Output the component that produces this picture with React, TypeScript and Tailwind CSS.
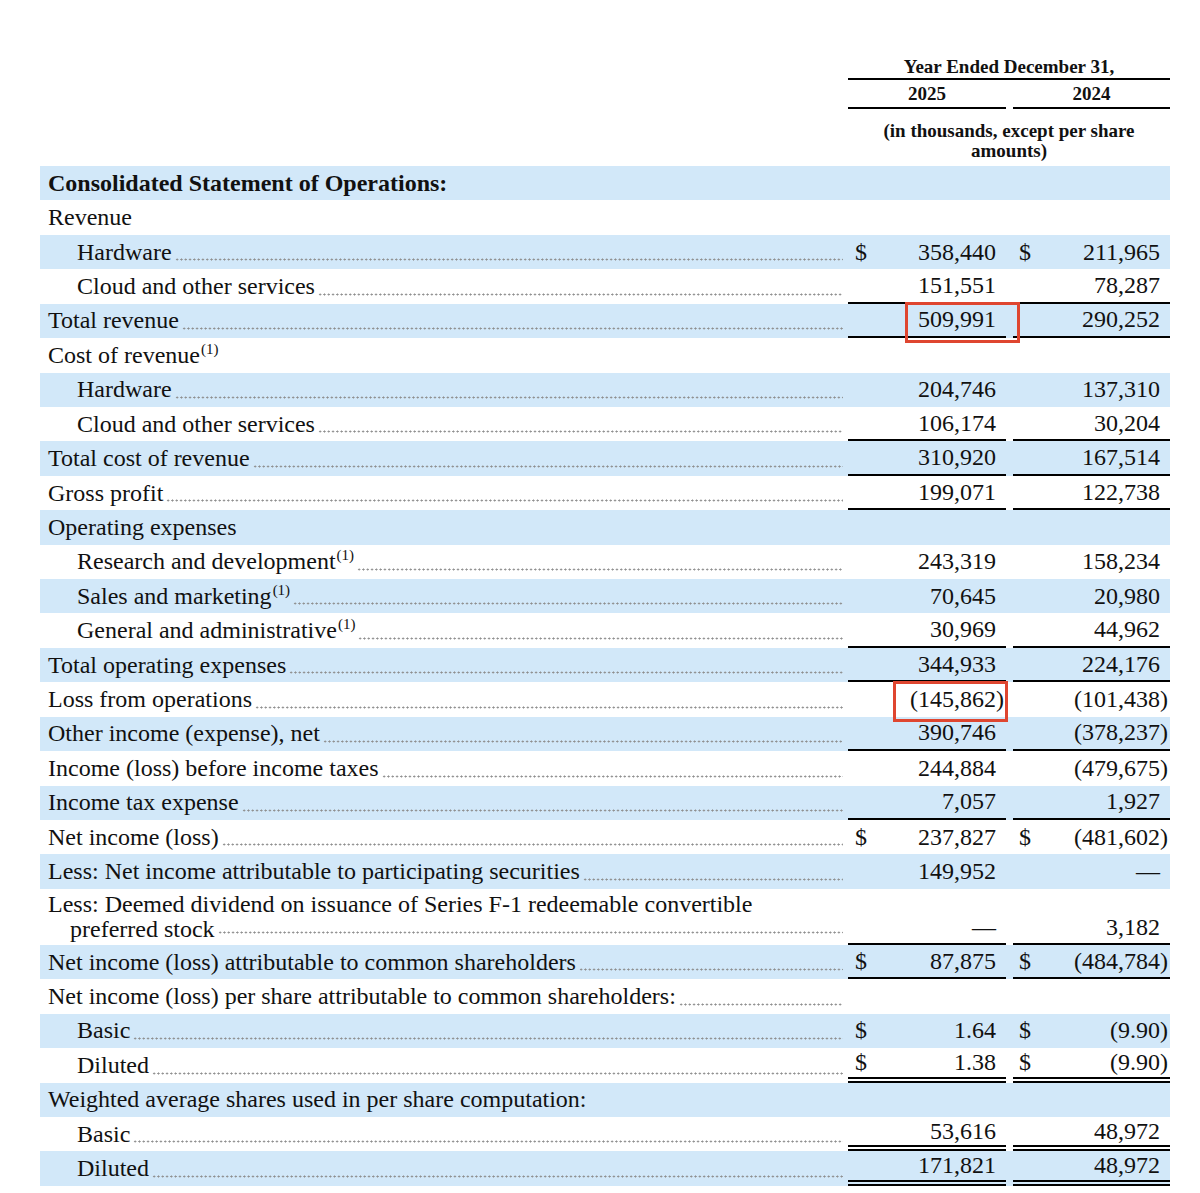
import React from "react";

type Line = "single" | "double";

type Row = {
    label: string;
    cont?: string; // second line of a wrapped label
    sup?: boolean;
    indent?: boolean;
    bold?: boolean;
    dots?: boolean;
    dollar?: boolean;
    a?: string;
    b?: string;
    line?: Line;
    mark?: "total" | "loss";
};

const rows: Array<Row> = [
    { label: "Consolidated Statement of Operations:", bold: true, dots: false },
    { label: "Revenue", dots: false },
    { label: "Hardware", indent: true, dollar: true, a: "358,440", b: "211,965" },
    { label: "Cloud and other services", indent: true, a: "151,551", b: "78,287", line: "single" },
    { label: "Total revenue", a: "509,991", b: "290,252", line: "single", mark: "total" },
    { label: "Cost of revenue", sup: true, dots: false },
    { label: "Hardware", indent: true, a: "204,746", b: "137,310" },
    { label: "Cloud and other services", indent: true, a: "106,174", b: "30,204", line: "single" },
    { label: "Total cost of revenue", a: "310,920", b: "167,514", line: "single" },
    { label: "Gross profit", a: "199,071", b: "122,738", line: "single" },
    { label: "Operating expenses", dots: false },
    { label: "Research and development", sup: true, indent: true, a: "243,319", b: "158,234" },
    { label: "Sales and marketing", sup: true, indent: true, a: "70,645", b: "20,980" },
    { label: "General and administrative", sup: true, indent: true, a: "30,969", b: "44,962", line: "single" },
    { label: "Total operating expenses", a: "344,933", b: "224,176", line: "single" },
    { label: "Loss from operations", a: "(145,862)", b: "(101,438)", mark: "loss" },
    { label: "Other income (expense), net", a: "390,746", b: "(378,237)", line: "single" },
    { label: "Income (loss) before income taxes", a: "244,884", b: "(479,675)" },
    { label: "Income tax expense", a: "7,057", b: "1,927", line: "single" },
    { label: "Net income (loss)", dollar: true, a: "237,827", b: "(481,602)" },
    { label: "Less: Net income attributable to participating securities", a: "149,952", b: "—" },
    {
        label: "Less: Deemed dividend on issuance of Series F-1 redeemable convertible",
        cont: "preferred stock",
        a: "—",
        b: "3,182",
        line: "single",
    },
    { label: "Net income (loss) attributable to common shareholders", dollar: true, a: "87,875", b: "(484,784)", line: "single" },
    { label: "Net income (loss) per share attributable to common shareholders:" },
    { label: "Basic", indent: true, dollar: true, a: "1.64", b: "(9.90)" },
    { label: "Diluted", indent: true, dollar: true, a: "1.38", b: "(9.90)", line: "double" },
    { label: "Weighted average shares used in per share computation:", dots: false },
    { label: "Basic", indent: true, a: "53,616", b: "48,972", line: "double" },
    { label: "Diluted", indent: true, a: "171,821", b: "48,972", line: "double" },
    { label: "Pro forma net income (loss) per share attributable to common shareholders", dots: false },
];

const Leader = () => (
    <span className="flex-1 self-end mb-[8px] ml-[3px] h-[3px] min-w-[10px] bg-[radial-gradient(circle,#8e8e8e_0.8px,transparent_1.3px)] bg-[length:4.3px_3px] bg-repeat-x" />
);

// numbers keep their closing paren hanging past the right edge
const Amount = ({ v }: { v: string }) => {
    if (v.endsWith(")")) {
        return (
            <span>
                {v.slice(0, -1)}
                <span className="-mr-[8px]">)</span>
            </span>
        );
    }
    return <span>{v}</span>;
};

const RedBox = ({ kind }: { kind: "total" | "loss" }) =>
    kind === "total" ? (
        <div className="absolute z-10 left-[57px] top-[-2px] w-[115px] h-[41px] border-[3px] border-[#df4630]" />
    ) : (
        <div className="absolute z-10 left-[45px] top-[-1px] w-[115px] h-[41px] border-[3px] border-[#df4630]" />
    );

const ValueCell = ({
    v,
    dollar,
    line,
    tall,
    pl,
    mark,
}: {
    v?: string;
    dollar?: boolean;
    line?: Line;
    tall: boolean;
    pl: string;
    mark?: "total" | "loss";
}) => (
    <div
        className={`relative flex justify-between pr-[10px] ${pl} ${tall ? "items-end pb-[3px]" : "items-center"} ${
            line === "single" ? "border-b-2 border-black" : ""
        } ${line === "double" ? "border-b-[6px] border-double border-black" : ""}`}
    >
        <span>{dollar ? "$" : ""}</span>
        {v ? <Amount v={v} /> : null}
        {mark ? <RedBox kind={mark} /> : null}
    </div>
);

const StatementRow = ({ row, idx }: { row: Row; idx: number }) => {
    const tall = !!row.cont;
    const dots = row.dots !== false;
    return (
        <div
            className={`grid grid-cols-[808px_158px_7px_157px] ${tall ? "h-[56px]" : "h-[34.43px]"} ${
                idx % 2 === 0 ? "bg-[#d2e8f9]" : "bg-white"
            }`}
        >
            {tall ? (
                <div className="flex flex-col justify-center pl-[8px] pr-[5px] leading-[25px]">
                    <span className="whitespace-nowrap">{row.label}</span>
                    <div className="flex pl-[22px]">
                        <span className="whitespace-nowrap">{row.cont}</span>
                        <Leader />
                    </div>
                </div>
            ) : (
                <div className={`flex items-center pr-[5px] ${row.indent ? "pl-[37px]" : "pl-[8px]"}`}>
                    <span className={`whitespace-nowrap ${row.bold ? "font-bold" : ""}`}>
                        {row.label}
                        {row.sup ? <sup className="text-[15px] top-[-0.6em] ml-[1px]">(1)</sup> : null}
                    </span>
                    {dots ? <Leader /> : null}
                </div>
            )}
            <ValueCell v={row.a} dollar={row.dollar} line={row.line} tall={tall} pl="pl-[7px]" mark={row.mark} />
            <div />
            <ValueCell v={row.b} dollar={row.dollar} line={row.line} tall={tall} pl="pl-[6px]" />
        </div>
    );
};

export default function App() {
    return (
        <div className="w-[1200px] h-[1193px] overflow-hidden bg-white text-[#111] font-['Liberation_Serif',serif] text-[24px] leading-[25px]">
            <div className="ml-[40px] w-[1130px] pt-[56px]">
                {/* column header */}
                <div className="grid grid-cols-[808px_158px_7px_157px] text-[19px] font-bold leading-[20px]">
                    <div />
                    <div className="col-span-3 text-center pt-[1px] pb-[1px] border-b-2 border-black">
                        Year Ended December 31,
                    </div>
                    <div />
                    <div className="text-center pt-[4px] pb-[3px] border-b-2 border-black">2025</div>
                    <div />
                    <div className="text-center pt-[4px] pb-[3px] border-b-2 border-black">2024</div>
                    <div />
                    <div className="col-span-3 text-center px-[30px] pt-[12px] pb-[5px]">
                        (in thousands, except per share amounts)
                    </div>
                </div>
                {rows.map((r, i) => (
                    <StatementRow row={r} idx={i} key={i} />
                ))}
            </div>
        </div>
    );
}
